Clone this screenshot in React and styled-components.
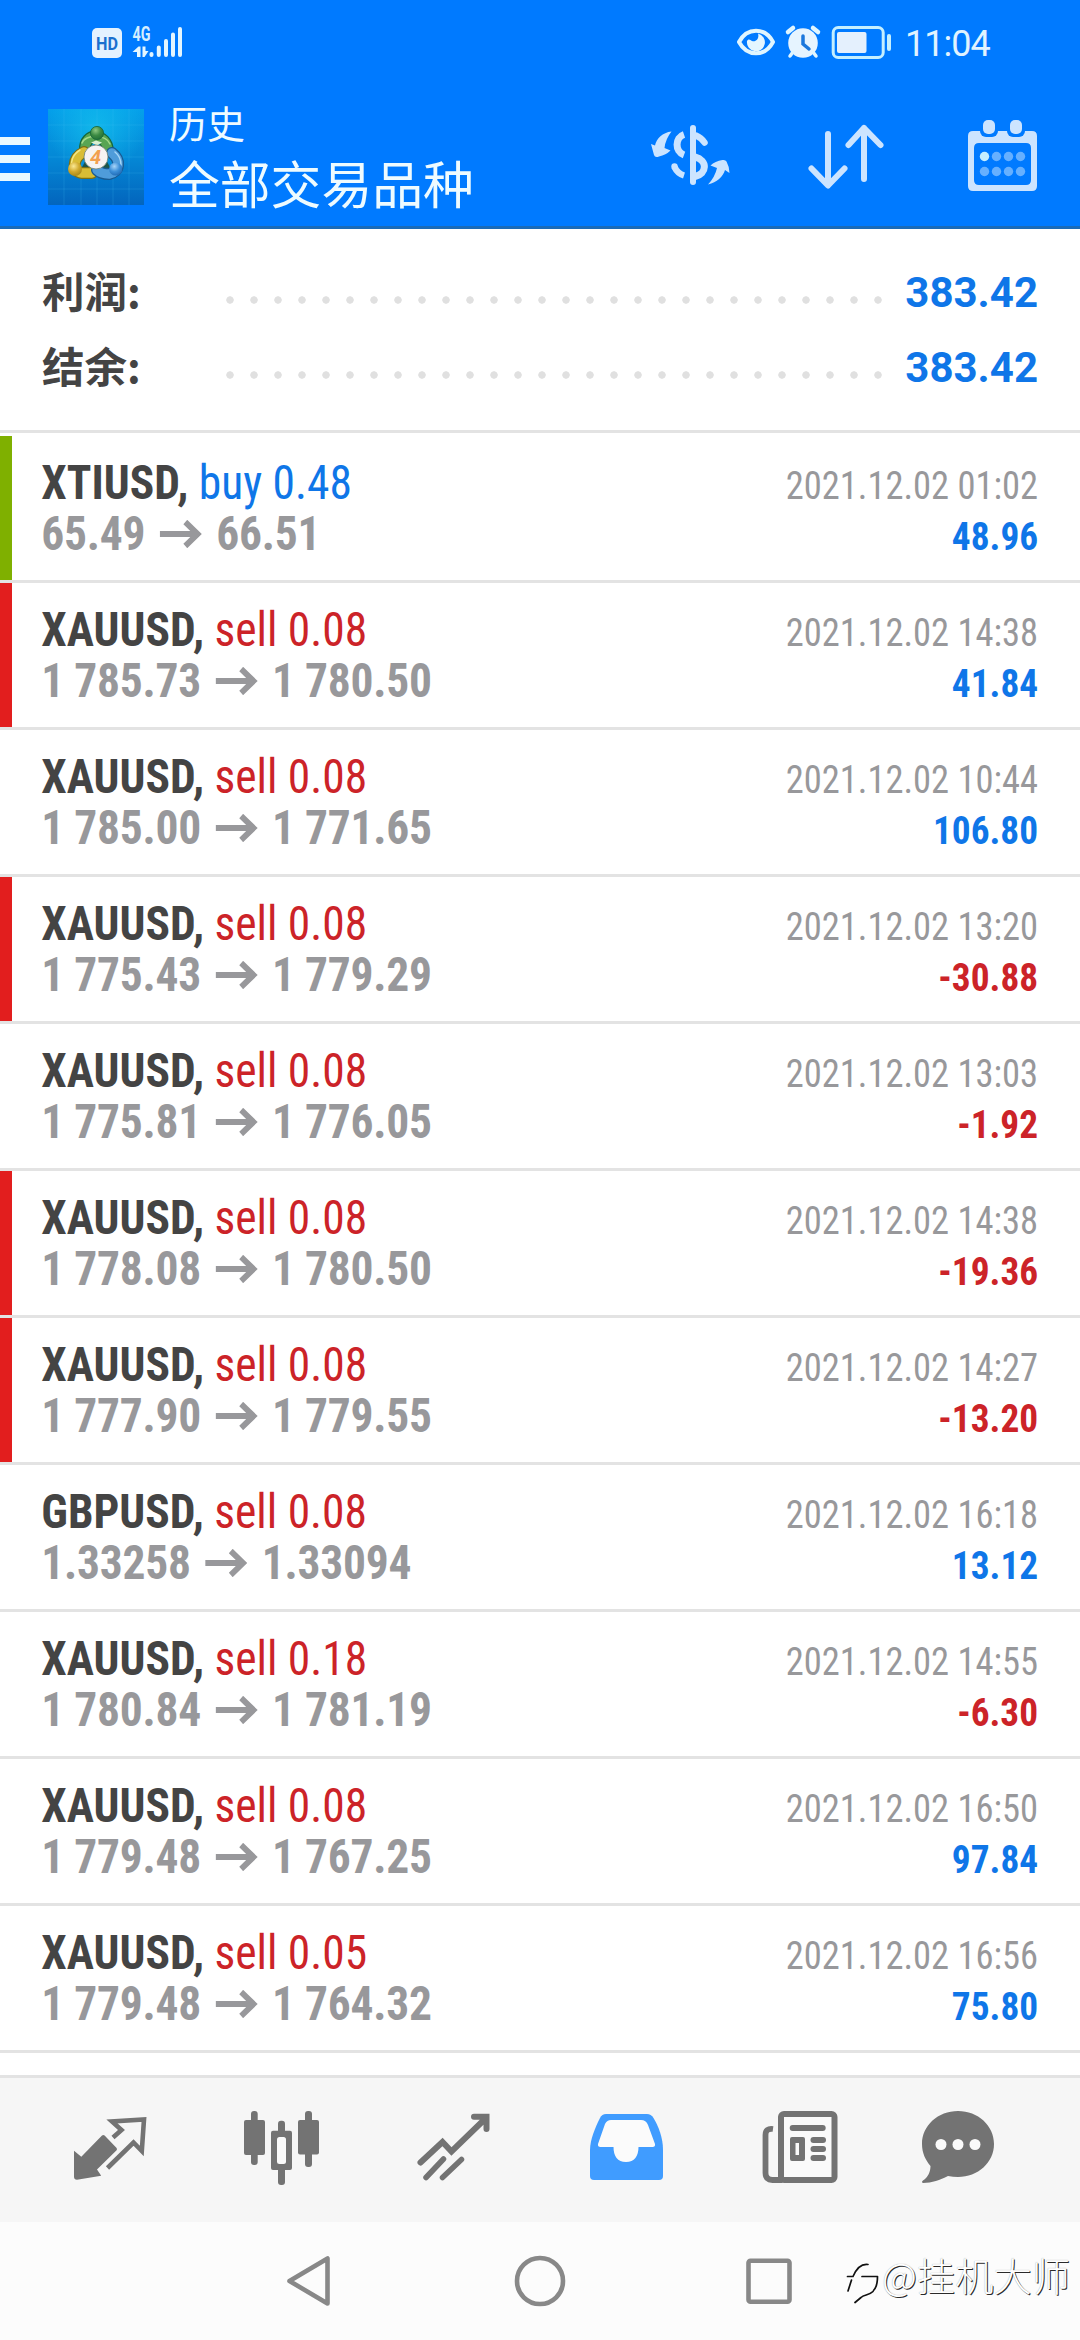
import React from "react";
import styled, { createGlobalStyle } from "styled-components";

const GlobalStyle = createGlobalStyle`
  * {
    box-sizing: border-box;
  }
  body {
    margin: 0;
    background: #fff;
    font-family: Roboto, "Noto Sans CJK SC", sans-serif;
  }
  svg {
    display: block;
    flex: none;
  }
`;

const Screen = styled.div`
  display: flex;
  flex-direction: column;
  width: 1080px;
  height: 2340px;
  overflow: hidden;
  background: #fff;
`;

const TopArea = styled.header`
  height: 229px;
  background: #007aff;
  border-bottom: 3px solid #1a6bb8;
`;

const StatusBar = styled.div`
  display: flex;
  justify-content: space-between;
  height: 86px;
`;

const StatusRight = styled.div`
  display: flex;
  width: 350px;
`;

const Clock = styled.span`
  margin-left: 8px;
  font-family: Roboto, sans-serif;
  font-size: 36px;
  font-weight: 400;
  line-height: 88px;
  letter-spacing: -1px;
  color: #e0f3ff;
`;

const Toolbar = styled.div`
  display: flex;
  height: 140px;
`;

const MenuButton = styled.div`
  display: flex;
  flex-direction: column;
  gap: 10px;
  width: 48px;
  padding-top: 51px;
`;

const MenuLine = styled.span`
  width: 30px;
  height: 8px;
  background: #e9f8ff;
`;

const LogoBox = styled.div`
  width: 96px;
  padding-top: 23px;
`;

const Titles = styled.div`
  flex: 1;
  padding: 8px 0 0 25px;
  font-family: "Noto Sans CJK SC", sans-serif;
  color: #eefbff;
`;

const Title = styled.div`
  font-size: 38px;
  line-height: 56px;
`;

const Subtitle = styled.div`
  font-size: 50.8px;
  line-height: 64px;
`;

const Summary = styled.section`
  height: 204px;
  padding: 26px 42px 0 42px;
  border-bottom: 3px solid #e3e3e3;
`;

const SummaryRow = styled.div`
  display: flex;
  align-items: center;
  height: 75px;
`;

const SummaryLabel = styled.span`
  width: 184px;
  font-family: "Noto Sans CJK SC", sans-serif;
  font-size: 42.5px;
  font-weight: 700;
  line-height: 70px;
  padding-bottom: 5px;
  color: #444;
`;

const Dots = styled.span`
  width: 672px;
  height: 8px;
  margin-top: 14px;
  margin-left: -8px;
  background: radial-gradient(circle, #e0e0e0 3.4px, transparent 4px) 0 0 / 24px
    8px repeat-x;
`;

const SummaryValue = styled.span`
  flex: 1;
  text-align: right;
  font-size: 42px;
  font-weight: 700;
  line-height: 75px;
  color: #0f76e8;
`;

const Deals = styled.section`
  flex: none;
  height: 1642px;
  padding-top: 3px;
`;

const DealRow = styled.article`
  display: flex;
  height: 147px;
  border-bottom: 3px solid #e3e3e3;
  font-family: "Roboto Condensed", Roboto, sans-serif;
  font-stretch: 75%;
`;

const Marker = styled.div`
  width: 12px;
  background: ${(props) => props.$color || "transparent"};
`;

// the list uses a face a little narrower than Roboto Condensed
const DealInfo = styled.div`
  flex: 1;
  padding: 21px 0 0 31px;
  font-size: 48px;
  line-height: 51px;
  white-space: nowrap;
  transform: scaleX(0.947);
  transform-origin: 0 0;
`;

const Symbol = styled.span`
  font-weight: 700;
  color: #444;
`;

const Side = styled.span`
  color: ${(props) => (props.$side === "buy" ? "#0f76e8" : "#cc2328")};
`;

const Prices = styled.div`
  display: flex;
  align-items: center;
  gap: 15px;
  font-weight: 700;
  letter-spacing: -0.25px;
  color: #98989b;
`;

const DealResult = styled.div`
  padding: 24px 42px 0 0;
  text-align: right;
  font-size: 39.5px;
  line-height: 51px;
  white-space: nowrap;
`;

const DealTime = styled.div`
  color: #98989b;
  transform: scaleX(0.924);
  transform-origin: 100% 0;
`;

const Profit = styled.div`
  font-weight: 700;
  color: ${(props) => (props.$loss ? "#cc2328" : "#0f76e8")};
  transform: scaleX(0.945);
  transform-origin: 100% 0;
`;

const TabBar = styled.nav`
  display: flex;
  height: 147px;
  padding-left: 24px;
  border-top: 3px solid #e3e3e3;
  background: #f6f6f6;
`;

const NavBar = styled.footer`
  display: flex;
  align-items: flex-start;
  height: 118px;
  background: #fcfcfc;
`;

const Watermark = styled.span`
  margin-left: 2px;
  font-family: "Noto Sans CJK SC", sans-serif;
  font-size: 38.3px;
  font-weight: 300;
  line-height: 105px;
  color: #fff;
  white-space: nowrap;
  text-shadow: 1px 1px 0 #2a2a2a, 0 0 1px #999;
`;

const deals = [
  { symbol: "XTIUSD", side: "buy", lots: "0.48", open: "65.49", close: "66.51", time: "2021.12.02 01:02", profit: "48.96", mark: "#7fb000" },
  { symbol: "XAUUSD", side: "sell", lots: "0.08", open: "1 785.73", close: "1 780.50", time: "2021.12.02 14:38", profit: "41.84", mark: "#e21e1e" },
  { symbol: "XAUUSD", side: "sell", lots: "0.08", open: "1 785.00", close: "1 771.65", time: "2021.12.02 10:44", profit: "106.80" },
  { symbol: "XAUUSD", side: "sell", lots: "0.08", open: "1 775.43", close: "1 779.29", time: "2021.12.02 13:20", profit: "-30.88", mark: "#e21e1e" },
  { symbol: "XAUUSD", side: "sell", lots: "0.08", open: "1 775.81", close: "1 776.05", time: "2021.12.02 13:03", profit: "-1.92" },
  { symbol: "XAUUSD", side: "sell", lots: "0.08", open: "1 778.08", close: "1 780.50", time: "2021.12.02 14:38", profit: "-19.36", mark: "#e21e1e" },
  { symbol: "XAUUSD", side: "sell", lots: "0.08", open: "1 777.90", close: "1 779.55", time: "2021.12.02 14:27", profit: "-13.20", mark: "#e21e1e" },
  { symbol: "GBPUSD", side: "sell", lots: "0.08", open: "1.33258", close: "1.33094", time: "2021.12.02 16:18", profit: "13.12" },
  { symbol: "XAUUSD", side: "sell", lots: "0.18", open: "1 780.84", close: "1 781.19", time: "2021.12.02 14:55", profit: "-6.30" },
  { symbol: "XAUUSD", side: "sell", lots: "0.08", open: "1 779.48", close: "1 767.25", time: "2021.12.02 16:50", profit: "97.84" },
  { symbol: "XAUUSD", side: "sell", lots: "0.05", open: "1 779.48", close: "1 764.32", time: "2021.12.02 16:56", profit: "75.80" },
];

const SignalIcons = () => (
  <svg width="200" height="86" viewBox="0 0 200 86">
    <rect x="92" y="28" width="30" height="30" rx="5" fill="#e4f2ff" />
    <text x="107" y="50" textAnchor="middle" fontFamily="Roboto" fontSize="19" fontWeight="700" textLength="22" lengthAdjust="spacingAndGlyphs" fill="#1b70cf">HD</text>
    <text x="132.5" y="40.5" fontFamily="Roboto" fontSize="19.5" fontWeight="700" textLength="18" lengthAdjust="spacingAndGlyphs" fill="#d5eeff">4G</text>
    <g stroke="#e4f6ff" strokeWidth="4" strokeLinecap="round">
      <path d="M151.500 54v1M158.800 47.500v7.500M166 41v14M173 34.500v20.500M180 29v26" />
    </g>
    <path d="M132.500 52l6-5.500h2V57h-3.500v-5zM142.500 46.500h3v4.500h3l-4 6h-2z" fill="#e4f6ff" />
  </svg>
);

const StatusIcons = () => (
  <svg width="167" height="86" viewBox="730 0 167 86">
    <path d="M739 42c8-15 26-15 34 0-8 15-26 15-34 0z" fill="none" stroke="#dff5ff" strokeWidth="4" strokeLinejoin="round" />
    <path d="M747 41a9 9 0 1 0 11-7.500c1.500 5-2 9-6 7.500-2-1-3-3-5 0z" fill="#e4f6ff" />
    <circle cx="803" cy="43" r="14.800" fill="#e6f4ff" />
    <path d="M788 32l5-4M818 32l-5-4" stroke="#dff5ff" strokeWidth="4.500" strokeLinecap="round" />
    <path d="M793 52l-3 4M813 52l3 4" stroke="#dff5ff" strokeWidth="3.500" strokeLinecap="round" />
    <path d="M803 36v8l6 5" fill="none" stroke="#1b77dc" strokeWidth="3.500" strokeLinecap="round" />
    <rect x="833.200" y="27.500" width="50" height="30" rx="5" fill="none" stroke="#c4efff" strokeWidth="3" />
    <rect x="837" y="32" width="29.500" height="21" rx="2" fill="#e4f0fd" />
    <rect x="887" y="34" width="4" height="17" rx="2" fill="#c4efff" />
  </svg>
);

const AppLogo = () => (
  <svg width="96" height="96" viewBox="0 0 96 96">
    <defs>
      <linearGradient id="sky" x1="0" y1="0" x2="0" y2="1">
        <stop offset="0" stopColor="#05a0ea" />
        <stop offset="0.5" stopColor="#0488d6" />
        <stop offset="1" stopColor="#0365bd" />
      </linearGradient>
      <radialGradient id="glow" cx="0.5" cy="0.2" r="0.5">
        <stop offset="0" stopColor="#16c4ee" stopOpacity="0.7" />
        <stop offset="1" stopColor="#16c4ee" stopOpacity="0" />
      </radialGradient>
      <radialGradient id="green" cx="0.4" cy="0.3" r="0.8">
        <stop offset="0" stopColor="#8fc983" />
        <stop offset="0.5" stopColor="#3b8a43" />
        <stop offset="1" stopColor="#1c6a35" />
      </radialGradient>
      <radialGradient id="gold" cx="0.4" cy="0.3" r="0.8">
        <stop offset="0" stopColor="#fbe994" />
        <stop offset="0.5" stopColor="#d0a92c" />
        <stop offset="1" stopColor="#9d7f15" />
      </radialGradient>
      <radialGradient id="blue" cx="0.4" cy="0.3" r="0.8">
        <stop offset="0" stopColor="#a9d5f8" />
        <stop offset="0.5" stopColor="#3c8fd8" />
        <stop offset="1" stopColor="#1a62ad" />
      </radialGradient>
    </defs>
    <rect width="96" height="96" fill="url(#sky)" />
    <rect width="96" height="96" fill="url(#glow)" />
    <path d="M16 0v96M33 0v96M49 0v96M65 0v96M81 0v96M0 16h96M0 32h96M0 48h96M0 64h96M0 80h96" stroke="#4cc4f0" strokeOpacity="0.2" />
    <path d="M48 33l15 27H33z" fill="#1f5548" />
    <g fill="none" strokeLinecap="round">
      <path d="M37 41c-1-18 22-18 23 1" stroke="#17663a" strokeWidth="12" />
      <path d="M37 41c-1-18 22-18 23 1" stroke="#58a553" strokeWidth="9.500" />
      <path d="M34 34c3-9 24-9 28 1" stroke="#a5d98a" strokeWidth="1.500" />
      <path d="M36 43c-12 6-12 20-2 21h10" stroke="#7d7013" strokeWidth="12" />
      <path d="M36 43c-12 6-12 20-2 21h10" stroke="#d9bd35" strokeWidth="9.500" />
      <path d="M32 41c-8 5-9 12-8 15" stroke="#f4e682" strokeWidth="1.500" />
      <path d="M64 44c9 7 8 19-3 21-5 0-9-1-12-4" stroke="#185a91" strokeWidth="12" />
      <path d="M64 44c9 7 8 19-3 21-5 0-9-1-12-4" stroke="#4f9cda" strokeWidth="9.500" />
      <path d="M67 43c5 4 6 8 6 13" stroke="#a6d6f6" strokeWidth="1.500" />
    </g>
    <path d="M43 33.500l5-2 6 2-5 3z" fill="#d9f0d2" />
    <circle cx="49" cy="24" r="6.600" fill="url(#green)" stroke="#17663a" strokeWidth="0.800" />
    <circle cx="27" cy="60" r="7" fill="url(#gold)" />
    <circle cx="67.700" cy="60" r="6.600" fill="url(#blue)" />
    <circle cx="48" cy="48" r="12" fill="#f6f3f2" stroke="#697d70" strokeWidth="0.800" />
    <text x="47.5" y="55" textAnchor="middle" fontFamily="Roboto" fontSize="20" fontWeight="700" fontStyle="italic" fill="#f2a04f">4</text>
  </svg>
);

const ToolbarIcons = () => (
  <svg width="440" height="140" viewBox="640 86 440 140">
    <g fill="none" stroke="#cce4ff" strokeWidth="6">
      <path d="M693 128v54" strokeLinecap="round" />
      <path d="M684 134.500c-9 3-9.500 17 0 20.500" strokeWidth="7" />
      <path d="M696 135.500q5 2 8.500 7" strokeWidth="6.500" strokeLinecap="round" />
      <path d="M695 157c13 3 12 17 0 19.500" strokeWidth="7" />
      <path d="M674.500 167q3 6.500 9.500 8.500" strokeWidth="6.500" />
      <circle cx="674.500" cy="166.500" r="3.200" fill="#cce4ff" stroke="none" />
      <path d="M828 134v51M811.500 168.500l16.500 17 16.500-17M864 179v-51M848.500 145l15.500-17 16.500 17" strokeLinecap="round" strokeLinejoin="round" />
    </g>
    <path d="M671.500 131.500c-9 1-15 7-16.500 14l-4-1.500 3 11q1 3 5 1.500 7-1.500 11.500-6l-6-2.500q1-9 7-16.500z" fill="#cce4ff" />
    <path d="M708 184.500c9-2 15-8 17-14.500l4.500 3q0-6-3-11.500-1-2-4-1.500-7.500 1-12 5.500l6.500 2.500q-2 9-9 16.500z" fill="#cce4ff" />
    <path d="M973 131h59q5 0 5 5v50q0 5-5 5h-59q-5 0-5-5v-50q0-5 5-5zM979 143q-5 0-5 5v32q0 5 5 5h47q5 0 5-5v-32q0-5-5-5z" fill="#cce4ff" fillRule="evenodd" />
    <rect x="980" y="118" width="18" height="19" rx="6" fill="#007aff" />
    <rect x="1007" y="118" width="18" height="19" rx="6" fill="#007aff" />
    <rect x="983" y="120" width="12" height="14" rx="5" fill="#cce4ff" />
    <rect x="1010" y="120" width="12" height="14" rx="5" fill="#cce4ff" />
    {[156.5, 171.5].map((y) =>
      [984.5, 996.5, 1008.5, 1020.5].map((x) => (
        <circle key={x + y} cx={x} cy={y} r="4.700" fill={x < 990 && y < 160 ? "#c6efff" : "#66b0ff"} />
      ))
    )}
  </svg>
);

const ArrowRight = () => (
  <svg width="45" height="28" viewBox="0 0 45 28" fill="none" stroke="#98989b" strokeWidth="6">
    <path d="M0 14h40M27 2l13 12-13 12" />
  </svg>
);

// every tab is 172px wide, icons share one coordinate space along the bar
const TabIcon = ({ index, children }) => (
  <svg width="172" height="144" viewBox={`${24 + index * 172} 18 172 144`} fill="#737373">
    {children}
  </svg>
);

const Tabs = () => (
  <TabBar>
    <TabIcon index={0}>
      <path d="M74 90.700l7.300 6L102 75.500q1.300-1 2.600 0l12 12.500q.8 1.200 0 2.200L97 109.500l4.200 6.300L77 119.700q-3 0-3-3z" />
      <path d="M113 77.500l8.500-7.500-9.500-8.500 32-2-2.200 31.500-8.300-8.500L107.500 108" fill="none" stroke="#737373" strokeWidth="4.600" />
    </TabIcon>
    <TabIcon index={1}>
      <rect x="244" y="60" width="21" height="35" rx="2" />
      <rect x="251" y="51" width="6.700" height="54" rx="3" />
      <rect x="278" y="60.700" width="7" height="64.300" rx="3" />
      <rect x="271" y="70.700" width="21" height="39.300" rx="2" />
      <rect x="277" y="77" width="9" height="27" rx="2.500" fill="#fafafa" />
      <rect x="298" y="60" width="21" height="34.500" rx="2" />
      <rect x="305" y="51" width="7" height="56" rx="3" />
    </TabIcon>
    <TabIcon index={2}>
      <path d="M420.500 102.500L442.500 82l9 9.500L486 58M474 56.700h12.500V69" fill="none" stroke="#737373" strokeWidth="6" strokeLinecap="round" />
      <path d="M426 117.500l17.500-18.500M442.500 117.500l19-18" stroke="#737373" strokeWidth="5.500" strokeLinecap="round" />
    </TabIcon>
    <TabIcon index={3}>
      <path d="M590 116V90c0-10 5-22 10-32q2-4 6-4h41q4 0 6.500 4c5 8 9.500 20 9.500 32v26q0 4-4 4h-65q-4 0-4-4z" fill="#409cff" />
      <path d="M605 64l-7 20q-.5 3 2.500 3h13c0 9 4 15 12.500 15s12.500-6 12.500-15h14q3 0 2.500-3l-7-19q-2-5-7-5h-30q-4 0-6 4z" fill="#fbfbfb" />
    </TabIcon>
    <TabIcon index={4}>
      <rect x="781" y="54" width="53.500" height="66" rx="3" fill="#fafafa" stroke="#737373" strokeWidth="6" />
      <path d="M773 69q-7.500-1-7.500 6v38q0 7 7 7h10" fill="none" stroke="#737373" strokeWidth="5.800" />
      <rect x="789.700" y="65" width="36" height="6" rx="3" />
      <path d="M792 77h11q2 0 2 2v20q0 2-2 2h-11q-2 0-2-2V79q0-2 2-2zM795.500 83v12h3.500V83z" fillRule="evenodd" />
      <rect x="810.500" y="77" width="15.500" height="6" rx="3" />
      <rect x="810.500" y="86" width="15.500" height="6" rx="3" />
      <rect x="810.500" y="95" width="15.500" height="6" rx="3" />
    </TabIcon>
    <TabIcon index={5}>
      <path d="M958 51c20 0 36 14.500 36 33s-16 33-36 33q-5 0-10-1c-8 4-16 7-25 7q-2-1 0-2.500c5-3 7.500-9 7.500-14.500-5-6-8.500-13-8.500-22 0-18.500 16-33 36-33z" />
      <circle cx="941" cy="84.500" r="5.500" fill="#fafafa" />
      <circle cx="958" cy="84.500" r="5.500" fill="#fafafa" />
      <circle cx="975" cy="84.500" r="5.500" fill="#fafafa" />
    </TabIcon>
  </TabBar>
);

const App = () => {
  return (
    <Screen>
      <GlobalStyle />
      <TopArea>
        <StatusBar>
          <SignalIcons />
          <StatusRight>
            <StatusIcons />
            <Clock>11:04</Clock>
          </StatusRight>
        </StatusBar>
        <Toolbar>
          <MenuButton>
            <MenuLine />
            <MenuLine />
            <MenuLine />
          </MenuButton>
          <LogoBox>
            <AppLogo />
          </LogoBox>
          <Titles>
            <Title>历史</Title>
            <Subtitle>全部交易品种</Subtitle>
          </Titles>
          <ToolbarIcons />
        </Toolbar>
      </TopArea>

      <Summary>
        {["利润:", "结余:"].map((label) => (
          <SummaryRow key={label}>
            <SummaryLabel>{label}</SummaryLabel>
            <Dots />
            <SummaryValue>383.42</SummaryValue>
          </SummaryRow>
        ))}
      </Summary>

      <Deals>
        {deals.map((deal, i) => (
          <DealRow key={i}>
            <Marker $color={deal.mark} />
            <DealInfo>
              <div>
                <Symbol>{deal.symbol},</Symbol>{" "}
                <Side $side={deal.side}>
                  {deal.side} {deal.lots}
                </Side>
              </div>
              <Prices>
                <span>{deal.open}</span>
                <ArrowRight />
                <span>{deal.close}</span>
              </Prices>
            </DealInfo>
            <DealResult>
              <DealTime>{deal.time}</DealTime>
              <Profit $loss={deal.profit.startsWith("-")}>{deal.profit}</Profit>
            </DealResult>
          </DealRow>
        ))}
      </Deals>

      <Tabs />

      <NavBar>
        <svg width="880" height="118" viewBox="0 162 880 118" fill="none" stroke="#888" strokeWidth="4.600" strokeLinejoin="round">
          <path d="M289.500 221l38-22.500v45z" />
          <circle cx="540" cy="221" r="23" />
          <rect x="748.500" y="200.700" width="41" height="41" rx="2" />
          <g stroke="#111" strokeWidth="1.700" strokeLinecap="round">
            <path d="M847.500 216.500h5.500c3-7 8-13 15-12M862 216.500h15.500c0 6-1 11-4 14M873 231.500c-4 4-9 3-12 6l-6 5M851.500 220l-3.500 11" />
          </g>
        </svg>
        <Watermark>@挂机大师</Watermark>
      </NavBar>
    </Screen>
  );
};

export default App;
